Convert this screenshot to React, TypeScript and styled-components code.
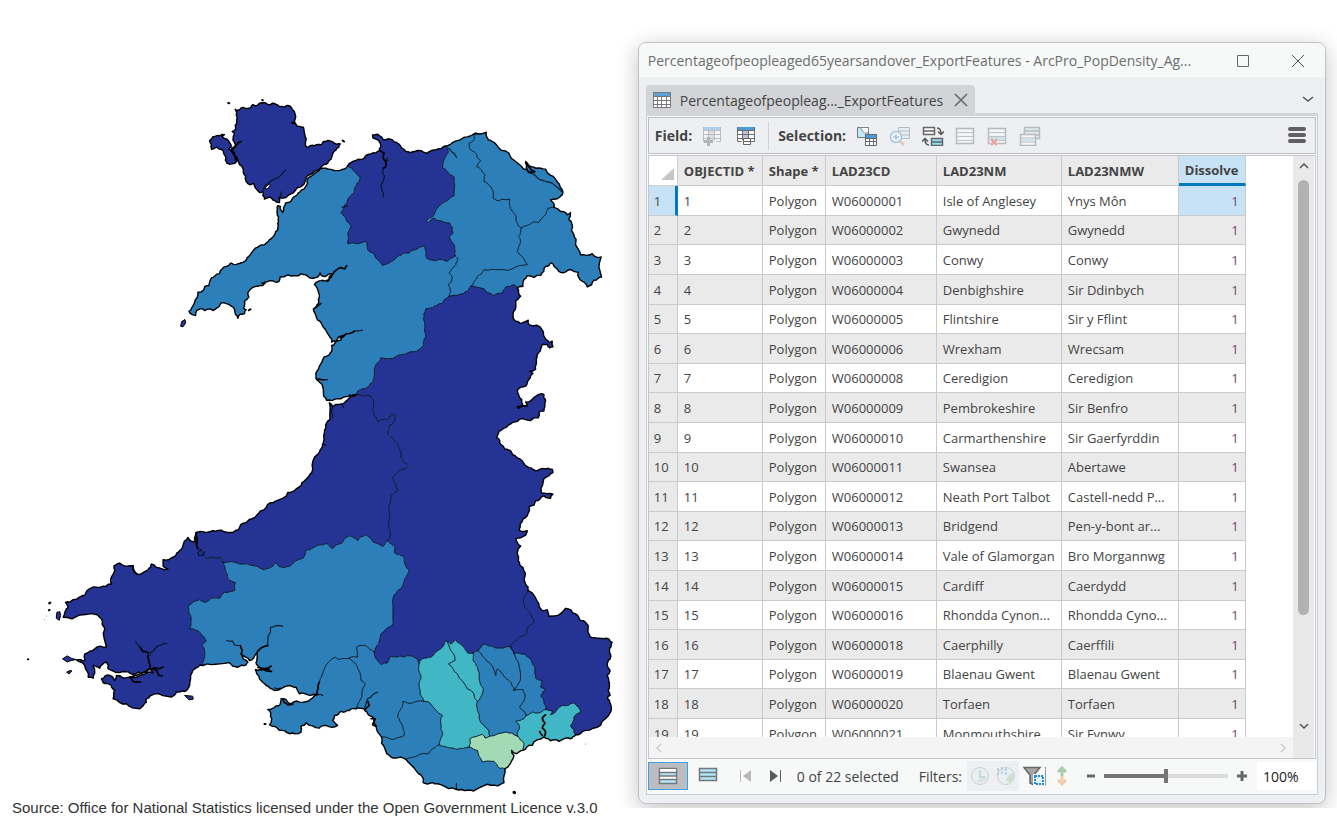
import React from 'react';
import styled, { createGlobalStyle, css } from 'styled-components';

const GlobalStyle = createGlobalStyle`
  *, *::before, *::after { box-sizing: border-box; }
  body { margin: 0; background: #fff; color: #444; font-family: "Open Sans", "Noto Sans", sans-serif; }
  button, input { font: inherit; color: inherit; }
`;

/* ------------------------------------------------------------------ map */

type Point = [number, number];

const sheets = {
  a: [540, 270],
  b: [1200, 360],
  c: [900, 960],
  d: [60, 1560],
  e: [720, 1560],
  f: [1200, 1740],
  w: [0, 0],
} as const;

const parse = (source: string): Point[] => {
  let sheet: readonly [number, number] = sheets.w;
  const out: Point[] = [];
  source.trim().split(/\s+/).forEach((token) => {
    if (token in sheets) {
      sheet = sheets[token as keyof typeof sheets];
      return;
    }
    const [x, y] = token.split(',').map(Number);
    out.push([x + sheet[0], y + sheet[1]]);
  });
  return out;
};

const noise = (x: number, y: number) => {
  const v = Math.sin(x * 12.9898 + y * 78.233) * 43758.5453;
  return (v - Math.floor(v)) * 2 - 1;
};

/* Breaks long segments up so that shores and borders look surveyed. */
const roughen = (points: Point[], amount: number): Point[] => {
  let line = points;
  for (let pass = 0; pass < 2; pass += 1) {
    const next: Point[] = [];
    line.forEach((p, i) => {
      next.push(p);
      const q = line[i + 1];
      if (!q) return;
      const dx = q[0] - p[0];
      const dy = q[1] - p[1];
      if (Math.hypot(dx, dy) < 9) return;
      const k = noise(p[0] + q[0], p[1] + q[1]) * amount;
      next.push([(p[0] + q[0]) / 2 - dy * k, (p[1] + q[1]) / 2 + dx * k]);
    });
    line = next;
  }
  return line;
};

const coast = (s: string) => roughen(parse(s), 0.17);
const border = (s: string) => roughen(parse(s), 0.13);

const coasts = {
  anglesey: coast('a 167,58 172,62 190,52 205,55 220,44 228,48 240,40 257,38 268,45 278,40 290,43 300,50 325,46 337,55 345,65 349,80 345,95 338,100 348,100 352,108 372,112 375,130 380,150 378,165 383,173 405,168 425,165 432,155 445,152 462,158 483,162 470,180 460,192 455,208 445,220 425,232 412,242 400,250 385,257 380,262 375,282 362,292 345,305 325,318 312,325 300,322 300,338 285,332 270,322 255,328 250,305 240,308 228,295 222,280 212,285 200,275 198,258 192,250 188,230 180,225 175,210 168,200 155,180 168,165 160,150 165,130 158,125 168,118 172,95 170,75 167,58'),
  holy: coast('a 90,152 100,140 120,138 135,134 128,140 150,158 155,172 147,178 158,185 166,200 172,215 158,222 142,220 138,200 132,190 128,180 110,172 96,178 95,163 90,152'),
  gwynedd: coast('a 505,228 490,238 465,242 450,238 430,235 415,245 402,254 390,262 384,270 379,290 364,303 349,318 337,330 318,340 310,368 303,350 295,348 293,370 297,395 295,420 285,435 270,450 255,465 238,470 220,485 208,500 190,518 170,525 155,520 140,530 125,540 120,552 105,560 92,572 88,588 75,592 70,603 55,608 52,625 42,645 36,655 28,665 38,675 48,678 52,662 62,657 75,663 90,658 100,663 112,655 125,640 140,642 155,650 165,660 168,675 175,686 182,674 195,672 200,660 192,655 195,635 208,622 205,610 215,597 235,590 250,588 255,578 272,573 298,576 302,562 325,556 345,558 365,552 385,560 400,566 415,562 422,550 430,560 445,556 460,552 448,572 430,572 410,578 405,585 415,600 420,620 418,640 402,658 410,680 425,700 c 77,28 90,50 97,68 110,65 118,52 135,48 125,62 108,68 104,76 97,78 97,95 75,112 60,140 50,170 62,190 72,215 82,243 105,240 130,235 155,228 165,230 172,225'),
  conwy: coast('a 505,228 530,212 555,205 575,192 600,182 605,170 600,155 582,145 580,135 595,133 608,142 612,150 640,150 655,160 668,175 b 20,95 45,95 85,100 110,90 142,78'),
  denbigh: coast('b 142,78 160,68 195,52 230,40'),
  flint: coast('b 230,40 262,37 268,60 290,72 330,100 350,125 385,150 380,125 388,135 410,145 440,148 470,178 490,210 490,225 455,240 465,262'),
  wrexham: coast('b 465,262 485,275 505,285 515,278 510,300 520,315 525,345 530,375 545,405 580,402 607,412 608,472 585,482 565,502 550,485 538,458 510,450 485,458 465,440 458,430 440,440 425,467 385,468 375,480 372,500 355,505'),
  powys: coast('b 355,505 365,530 350,545 350,565 342,590 350,605 375,608 388,602 390,615 430,632 435,650 450,668 460,665 462,682 452,685 445,675 430,675 425,690 415,705 c 712,120 710,150 692,155 702,162 690,180 680,200 655,215 668,240 672,258 655,262 658,267 685,260 680,248 700,240 720,225 735,225 740,245 735,275 720,278 718,295 670,298 640,310 620,325 600,335 593,355 605,375 635,395 640,405 670,425 690,445 715,455 735,448 760,450 762,460 735,478 730,500 728,522 762,525 755,537 735,530 710,545 705,558 690,563 685,590 672,600 660,632 685,635 680,648 650,660 665,680 655,700 658,725 672,745 675,780 f 380,15 388,35'),
  monmouth: coast('f 388,35 420,75 430,95 445,92 450,112 500,88 530,105 545,125 568,140 575,175 600,178 630,180 640,190 632,215 634,240 626,262 634,275 625,290 632,320 634,350 626,356 635,375 635,400 605,440 560,455 530,468'),
  newport: coast('f 372,515 400,500 435,475 455,486 480,488 515,480 530,468'),
  cardiff: coast('f 318,570 330,560 345,530 338,515 352,525 372,515'),
  vale: coast('f 20,542 50,575 72,612 100,612 130,620 170,632 205,635 240,628 275,620 315,612 318,570'),
  bridgend: coast('e 427,655 437,690 455,715 485,715 500,722'),
  neath: coast('e 350,570 375,572 390,590 405,600 410,620 427,655'),
  swansea: coast('e 230,528 215,540 180,550 150,555 135,540 125,540 120,560 85,572 97,600 90,618 120,635 150,645 185,640 185,622 200,612 240,628 260,620 295,620 280,605 285,590 305,578 330,575 350,570'),
  carmarthen: coast('d 550,440 600,435 655,445 680,438 685,430 665,405 690,425 712,402 e 52,420 54,440 68,450 48,452 60,480 80,500 105,515 150,500 170,505 180,525 205,528 230,528'),
  pembroke: coast('d 530,40 530,70 505,55 495,65 480,95 465,112 430,122 430,140 445,150 410,145 395,135 385,152 350,165 340,140 300,132 283,140 280,165 275,195 240,205 205,212 195,228 160,242 137,250 145,265 130,295 180,288 245,300 255,330 260,385 225,390 195,405 195,425 170,423 195,440 205,475 220,478 225,460 220,440 240,448 262,430 265,450 310,458 340,467 370,462 390,450 400,462 365,468 330,475 290,470 285,485 270,470 245,480 250,492 275,500 285,515 280,540 320,555 360,570 380,550 380,540 405,525 455,535 470,520 495,518 510,500 518,460 530,446 550,440'),
  ceredigion: coast('d 530,40 570,38 605,33 640,40 665,15 w 750,1560 770,1550 800,1525 830,1505 865,1480 900,1463 c 20,480 40,450 55,405 70,380 75,340 82,310 92,300 90,250 100,262 120,255 140,245 155,230 172,225'),
};

const borders = {
  gwyPow: border('c 172,225 175,215 190,208 205,203 222,185 225,155 230,135 245,115 262,118 280,117 295,108 b 12,705 25,700 60,690 72,680 75,660 80,650 78,620 72,600 80,568 105,560 130,552 150,530'),
  gwyCon: border('a 505,228 525,245 543,262 540,275 528,290 525,310 505,330 497,345 485,368 495,380 502,395 515,408 505,432 505,462 530,462 560,455 565,480 585,492 600,515 610,528 630,520 655,500 b 15,400 30,400 50,390 78,380 82,415 100,422 125,420 145,425 168,408'),
  gwyDen: border('b 168,408 175,415 170,435 150,460 160,475 148,495 155,515 150,530'),
  denCon: border('b 168,408 168,395 165,375 150,352 162,340 152,310 130,305 105,295 88,310 82,302 103,288 110,270 130,250 165,228 165,172 145,155 130,145 135,118 148,95 142,78'),
  denFli: border('b 230,40 225,60 210,70 215,90 228,98 245,122 232,140 258,165 255,185 280,210 282,235 300,242 332,238 340,275 352,292 358,318 368,325'),
  fliWre: border('b 368,325 400,308 420,308 440,285 447,265 465,262'),
  wrePow: border('b 355,505 345,495 320,502 310,520 285,528 265,520 255,508 230,502 215,500'),
  denWre: border('b 368,325 358,350 365,365 355,395 385,435 350,442 300,450 255,450 235,470 215,500'),
  denPow: border('b 215,500 205,515 180,525 150,530'),
  powMon: border('f 388,35 375,55 378,85 395,105 405,130 385,150 378,170 350,185 335,203'),
  powBla: border('f 335,203 290,207 250,195 237,215'),
  powCae: border('f 237,215 222,222'),
  powMer: border('f 222,222 205,222 195,205 175,190 170,183 155,195 145,188'),
  powRho: border('f 145,188 138,187 130,205 100,232 75,238 60,253'),
  powNea: border('f 60,253 55,240 25,230 0,232 e 450,415 445,432 425,437 405,400'),
  powCar: border('e 405,400 425,345 462,315 460,245 475,215 497,180 510,152 495,125 495,115 465,100 468,85 445,65'),
  cerPow: border('c 172,225 212,228 222,240 222,280 235,308 265,300 285,285 288,295 280,315 270,318 265,345 295,375 305,415 328,440 300,455 278,475 290,500 297,515 275,530 270,600 272,655 265,665'),
  cerCar: border('e 445,65 430,82 380,47 355,65 330,50 280,88 262,73 215,90 200,92 190,118 150,142 118,142 108,130 100,142 75,152 45,140 0,135 d 645,130 610,130'),
  cerPem: border('d 610,130 603,115 575,115 560,118 545,92 535,90 532,70 530,40'),
  pemCar: border('d 550,440 555,415 548,380 560,365 545,345 510,330 515,300 505,260 540,242 560,250 575,238 600,238 615,220 645,215 648,190 625,178 618,155 610,130'),
  carSwa: border('e 230,528 240,490 255,450 288,415 300,422 330,418'),
  carNea: border('e 330,418 355,415 352,385 380,380 405,400'),
  swaNea: border('e 330,418 352,440 365,485 378,495 350,570'),
  neaBri: border('e 427,655 465,662 495,650 490,620 475,595 485,570 490,548 f 40,372 75,368'),
  neaRho: border('f 60,253 65,290 60,325 75,368'),
  rhoBri: border('f 75,368 92,372 130,410 125,450 130,470 120,498'),
  briVal: border('f 120,498 105,508 88,525 60,528 20,542'),
  valRho: border('f 120,498 155,508 175,512 210,505'),
  valCdf: border('f 210,505 235,515 250,550 285,548 300,568 318,570'),
  cdfRho: border('f 210,505 212,480 250,467 258,478 272,472'),
  cdfCae: border('f 272,472 320,460 355,472'),
  cdfNew: border('f 355,472 375,495 372,515'),
  rhoMer: border('f 145,188 155,215 168,245 148,255 175,285 205,330 235,368'),
  merCae: border('f 222,222 222,245 235,265 240,300 253,330 240,365 235,368'),
  rhoCae: border('f 235,368 235,395 255,440 270,455 272,472'),
  caeBla: border('f 237,215 262,245 290,290 295,270 330,305 345,335'),
  blaTor: border('f 335,203 345,225 358,250 355,320 345,335'),
  caeTor: border('f 345,335 372,332 378,355 362,385 382,410'),
  caeNew: border('f 382,410 375,420 350,428 362,445 355,472'),
  torNew: border('f 382,410 400,400 420,402 440,392'),
  torMon: border('f 335,203 345,225 375,225 395,240 408,265 410,298 430,305 425,325 440,330 425,350 435,370 440,392'),
  newMon: border('f 440,392 460,395 455,408 490,380 525,372 545,402 525,415 515,440 530,468'),
};

const navy = '#253494';
const blue = '#2c7fb8';
const teal = '#41b6c4';
const mint = '#a1dab4';

/* Chains arcs into one ring, turning an arc round when its far end is the nearer one. */
const ring = (...arcs: Point[][]): Point[] => {
  const gap = (p: Point, q: Point) => Math.hypot(p[0] - q[0], p[1] - q[1]);
  let line = [...arcs[0]];
  if (arcs.length > 1) {
    const next = arcs[1];
    const head = Math.min(gap(line[0], next[0]), gap(line[0], next[next.length - 1]));
    const end = line[line.length - 1];
    const tail = Math.min(gap(end, next[0]), gap(end, next[next.length - 1]));
    if (head < tail) line.reverse();
  }
  arcs.slice(1).forEach((arc) => {
    const end = line[line.length - 1];
    const forward = gap(end, arc[0]) <= gap(end, arc[arc.length - 1]);
    line = line.concat(forward ? arc : [...arc].reverse());
  });
  return line;
};

const C = coasts;
const B = borders;

const regions: { name: string; fill: string; shape: Point[] }[] = [
  { name: 'Isle of Anglesey', fill: navy, shape: C.anglesey },
  { name: 'Holy Island', fill: navy, shape: C.holy },
  { name: 'Gwynedd', fill: blue, shape: ring(C.gwynedd, B.gwyPow, B.gwyDen, B.gwyCon) },
  { name: 'Conwy', fill: navy, shape: ring(C.conwy, B.denCon, B.gwyCon) },
  { name: 'Denbighshire', fill: blue, shape: ring(C.denbigh, B.denFli, B.denWre, B.denPow, B.gwyDen, B.denCon) },
  { name: 'Flintshire', fill: blue, shape: ring(C.flint, B.fliWre, B.denFli) },
  { name: 'Wrexham', fill: blue, shape: ring(C.wrexham, B.wrePow, B.denWre, B.fliWre) },
  { name: 'Powys', fill: navy, shape: ring(C.powys, B.powMon, B.powBla, B.powCae, B.powMer, B.powRho, B.powNea, B.powCar, B.cerPow, B.gwyPow, B.denPow, B.wrePow) },
  { name: 'Ceredigion', fill: navy, shape: ring(C.ceredigion, B.cerPow, B.cerCar, B.cerPem) },
  { name: 'Pembrokeshire', fill: navy, shape: ring(C.pembroke, B.pemCar, B.cerPem) },
  { name: 'Carmarthenshire', fill: blue, shape: ring(C.carmarthen, B.carSwa, B.carNea, B.powCar, B.cerCar, B.pemCar) },
  { name: 'Swansea', fill: blue, shape: ring(C.swansea, B.swaNea, B.carSwa) },
  { name: 'Neath Port Talbot', fill: blue, shape: ring(C.neath, B.neaBri, B.neaRho, B.powNea, B.carNea, B.swaNea) },
  { name: 'Bridgend', fill: blue, shape: ring(C.bridgend, B.briVal, B.rhoBri, B.neaBri) },
  { name: 'Vale of Glamorgan', fill: blue, shape: ring(C.vale, B.valCdf, B.valRho, B.briVal) },
  { name: 'Cardiff', fill: mint, shape: ring(C.cardiff, B.cdfNew, B.cdfCae, B.cdfRho, B.valCdf) },
  { name: 'Rhondda Cynon Taf', fill: teal, shape: ring(B.powRho, B.neaRho, B.rhoBri, B.valRho, B.cdfRho, B.rhoCae, B.rhoMer) },
  { name: 'Merthyr Tydfil', fill: teal, shape: ring(B.powMer, B.rhoMer, B.merCae) },
  { name: 'Caerphilly', fill: blue, shape: ring(B.powCae, B.merCae, B.rhoCae, B.cdfCae, B.caeNew, B.caeTor, B.caeBla) },
  { name: 'Blaenau Gwent', fill: blue, shape: ring(B.powBla, B.caeBla, B.blaTor) },
  { name: 'Torfaen', fill: blue, shape: ring(B.torMon, B.torNew, B.caeTor, B.blaTor) },
  { name: 'Newport', fill: teal, shape: ring(C.newport, B.newMon, B.torNew, B.caeNew, B.cdfNew) },
  { name: 'Monmouthshire', fill: navy, shape: ring(C.monmouth, B.newMon, B.torMon, B.powMon) },
];

const rivers = [
  'a 318,240 305,255 295,265 275,273 262,283 252,300',
  'a 300,338 303,322 306,306',
  'a 612,235 615,265 605,285 608,302 612,322',
  'a 488,352 505,348',
  'c 165,35 190,32',
  'c 50,177 65,180 85,181',
  'c 100,262 100,296',
  'c 125,252 133,265',
  'c 68,375 80,378',
  'b 148,85 165,100 172,112',
  'b 385,155 395,160 420,178 488,215',
  'd 362,385 348,368',
  'd 388,405 410,385 425,378 442,374',
  'd 662,380 645,378 638,366 622,365',
  'd 545,92 535,100 538,110 548,108 555,98',
  'e 85,380 90,345 93,325 110,320 130,322',
  'e 105,507 125,508',
  'e 230,528 250,530',
  'e 378,572 385,540 415,520',
  'f 172,615 172,632',
].map(border);

const estuaries = [
  'a 603,182 615,190 612,205 620,215 618,232 612,235',
  'a 155,180 160,190 168,200 175,212',
  'a 158,178 170,165 185,155',
  'a 338,97 346,98',
  'a 248,580 256,582',
  'a 408,655 424,642',
  'a 445,575 450,562 462,552 470,542 485,534 497,537 502,528',
  'c 122,55 135,47 150,42 165,35',
  'c 58,179 74,181',
  'c 150,228 160,228 170,226',
  'b 380,128 388,140 396,150 408,156 390,158 385,150',
  'd 388,405 380,398 370,398 362,385',
  'd 388,405 387,430 393,450 412,448 430,445',
  'd 393,450 412,455 418,470 428,470',
  'd 330,475 340,488 362,490',
  'd 330,475 345,470 365,464 380,460 393,450',
  'd 665,405 668,395 662,380',
  'd 340,140 345,160 352,166',
  'd 530,40 530,75 536,90',
  'e 52,402 62,390 85,380',
  'e 55,446 75,450 95,442',
  'e 60,452 80,456 96,458',
  'e 66,450 90,452',
  'e 233,527 236,508 240,490',
  'e 130,540 135,552 145,558 160,556',
  'e 378,572 390,560 386,548',
  'e 395,600 408,600 400,618 410,622',
  'f 435,475 440,460 430,448 438,432 430,418 440,408',
  'f 422,458 430,470',
].map(border);

const toPath = (points: Point[], closed = false) =>
  `M${points.map(([x, y]) => `${x.toFixed(1)} ${y.toFixed(1)}`).join('L')}${closed ? 'Z' : ''}`;

const WalesMap = () => (
  <MapSvg viewBox="0 270 1872 2130" role="img" aria-label="Map of Welsh local authorities">
    {regions.map((r) => (
      <path key={r.name} d={toPath(r.shape, true)} fill={r.fill} />
    ))}
    <g fill="none" stroke="#04121f" strokeLinejoin="round" strokeLinecap="round">
      {Object.entries(borders).map(([key, line]) => (
        <path key={key} d={toPath(line)} strokeWidth="2.8" />
      ))}
      {rivers.map((line, i) => (
        <path key={i} d={toPath(line)} strokeWidth="3.2" />
      ))}
      {estuaries.map((line, i) => (
        <path key={i} d={toPath(line)} strokeWidth="5" stroke="#000" />
      ))}
      {Object.entries(coasts).map(([key, line]) => (
        <path key={key} d={toPath(line)} strokeWidth="4.2" stroke="#000" />
      ))}
    </g>
    <g stroke="#000" strokeWidth="3" strokeLinejoin="round">
      <path d="M798 562l12 -10 2 4 -6 10 -8 2z" fill="#fff" />
      <path d="M1161 476l4 -1 1 7 -4 1z" fill="#fff" />
      <path d="M446 1963l4 -2 1 8 -4 1z" fill="#fff" />
      <path d="M546 966l10 -6 2 10 -8 12 -7 -2z" fill={navy} />
      <path d="M1030 422l4 3M748 932l5 -3M686 309l3 1M788 300l2 1" strokeWidth="6" strokeLinecap="round" />
      <path d="M171 1840l9 -2 2 12 -4 14 -9 -6z" fill={navy} />
      <path d="M188 1980l14 -9 14 8 14 3 -16 3 -12 4z" fill={navy} />
      <path d="M200 2020l10 -5 6 1 -8 9z" fill={navy} />
      <path d="M555 2090l24 2 2 9 -13 2z" fill={navy} />
      <path d="M148 1813l3 -2M147 1834l2 -1M84 1981l1 0M795 2176l3 0" strokeWidth="6" strokeLinecap="round" />
      <path d="M1545 2381l2 1" strokeWidth="9" strokeLinecap="round" />
      <path d="M1760 2236l1 0M132 1862l1 0M140 1851l1 0" strokeWidth="4" />
    </g>
  </MapSvg>
);

/* --------------------------------------------------------------- layout */

const Page = styled.main`
  display: grid;
  grid-template-columns: 624fr 713fr;
  align-items: start;
`;

const Figure = styled.figure`
  margin: 0;
  padding-top: 90px;
`;

const MapSvg = styled.svg`
  display: block;
  width: 100%;
  height: auto;
`;

const Caption = styled.figcaption`
  padding-left: 12px;
  font: 15px/18px "Liberation Sans", Arial, sans-serif;
  color: #333;
  white-space: nowrap;
`;

const Stage = styled.section`
  padding: 42px 11px 4px 15px;
  clip-path: inset(0 0 0 -30px);
`;

const Window = styled.section`
  display: flex;
  flex-direction: column;
  border: 1px solid #bfc1c4;
  border-radius: 8px;
  background: #eeeff2;
  box-shadow: 0 5px 22px rgba(0, 0, 0, 0.24);
  overflow: hidden;
`;

const TitleBar = styled.header`
  display: flex;
  align-items: center;
  height: 34px;
  padding: 1px 17px 0 9px;
  background: #f6f9f8;
`;

const Title = styled.h1`
  flex: 1;
  min-width: 0;
  margin: 0;
  font-size: 14px;
  line-height: 20px;
  font-weight: 400;
  color: #6d6d6d;
  white-space: nowrap;
`;

const PlainButton = styled.button<{ $w?: number; $faded?: boolean }>`
  display: flex;
  align-items: center;
  justify-content: center;
  flex: none;
  width: ${(p) => p.$w ?? 20}px;
  height: 20px;
  padding: 0;
  border: 0;
  background: none;
  opacity: ${(p) => (p.$faded ? 0.38 : 1)};
`;

const WindowButtons = styled.div`
  display: flex;
  gap: 35px;
`;

const Body = styled.div`
  padding: 8px 7px;
`;

const TabStrip = styled.div`
  display: flex;
  align-items: center;
  justify-content: space-between;
  border-bottom: 3px solid #d3d4d8;
`;

const Tab = styled.div`
  display: flex;
  align-items: center;
  gap: 8px;
  height: 28px;
  padding: 2px 4px 0 6px;
  border-radius: 4px 4px 0 0;
  background: #d3d4d8;
  font-size: 14px;
  white-space: nowrap;
`;

const Dock = styled.div`
  padding: 1px;
  border: 1px solid #c9ccd1;
  border-top: 0;
  background: #f7f9f9;
`;

const Toolbar = styled.div`
  display: flex;
  align-items: center;
  height: 37px;
  padding: 0 8px 0 6px;
  border: 1px solid #bcbfc4;
  background: #eeeff2;
`;

const ToolLabel = styled.span`
  font-size: 14px;
  font-weight: 700;
  color: #444;
`;

const ToolGroup = styled.div<{ $gap: number; $start: number }>`
  display: flex;
  gap: ${(p) => p.$gap}px;
  margin-left: ${(p) => p.$start}px;
`;

const Divider = styled.span`
  flex: none;
  width: 1px;
  height: 28px;
  margin: 0 9px 0 12px;
  background: #cfd1d5;
`;

const FilterDivider = styled.span`
  width: 1px;
  height: 19px;
  background: #999;
`;

const MenuButton = styled(PlainButton)`
  margin-left: auto;
`;

const Grid = styled.div`
  display: flex;
  margin-top: 1px;
  border: 1px solid #c4c6ca;
  background: #fff;
`;

const GridMain = styled.div`
  flex: 1;
  min-width: 0;
`;

const TableView = styled.div`
  height: 581px;
  overflow: hidden;
`;

const Table = styled.table`
  width: 597px;
  table-layout: fixed;
  border-collapse: separate;
  border-spacing: 0;
  font-size: 13px;
  line-height: 20px;
`;

const cell = css`
  padding: 0 0 0 6px;
  border-right: 1px solid #cacaca;
  border-bottom: 1px solid #cacaca;
  text-align: left;
  white-space: nowrap;
`;

const HeadCell = styled.th<{ $active?: boolean }>`
  ${cell}
  height: 30px;
  font-weight: 700;
  color: #444;
  background: ${(p) => (p.$active ? '#c8e2f5' : '#eaeaea')};
  ${(p) => p.$active && css`
    border-bottom: 3px solid #0079c1;
  `}
`;

const CornerCell = styled.td`
  padding: 8px 3px 0 12px;
  border-right: 1px solid #cfcfcf;
  border-bottom: 1px solid #cfcfcf;
  background: #fff;
`;

const RowNumber = styled.th<{ $current?: boolean }>`
  ${cell}
  padding-left: 5px;
  font-weight: 400;
  background: ${(p) => (p.$current ? '#c8e2f5' : '#eaeaea')};
  ${(p) => p.$current && css`
    border-right: 3px solid #0079c1;
  `}
`;

const Cell = styled.td<{ $number?: boolean; $current?: boolean }>`
  ${cell}
  ${(p) => p.$number && css`
    padding: 0 6px 0 0;
    text-align: right;
    color: #6a4a6c;
  `}
  ${(p) => p.$current && css`
    background: #c8e2f5;
  `}
`;

const Row = styled.tr`
  height: 30px;
  &:nth-child(5n + 2), &:nth-child(5n) { height: 29px; }
  &:nth-child(even) { background: #eaeaea; }
`;

const HScroll = styled.div`
  display: flex;
  align-items: center;
  justify-content: space-between;
  height: 21px;
  padding: 0 5px;
  background: #f4f4f4;
`;

const VScroll = styled.div`
  display: flex;
  flex-direction: column;
  align-items: center;
  width: 21px;
  padding-bottom: 22px;
  background: #e9e9e9;
`;

const Track = styled.div`
  flex: 1;
  padding-top: 4px;
`;

const Thumb = styled.div`
  width: 11px;
  height: 435px;
  border-radius: 6px;
  background: #b2b2b2;
`;

const ScrollEdge = styled.div`
  width: 1px;
  background: #fff;
`;

const Footer = styled.footer`
  display: flex;
  align-items: center;
  height: 34px;
  background: #f6f9f8;
  font-size: 14px;
  white-space: nowrap;
`;

const ViewButton = styled(PlainButton)<{ $pressed?: boolean }>`
  width: 40px;
  height: 28px;
  ${(p) => p.$pressed && css`
    border: 1px solid #35a3ea;
    background: #bcbdc3;
  `}
`;

const StepButtons = styled.div`
  display: flex;
  gap: 9px;
  margin: 0 12px 0 8px;
`;

const Status = styled.span`
  width: 122px;
`;

const FilterBox = styled.div`
  display: flex;
  align-items: center;
  gap: 6px;
  height: 30px;
  margin-left: 5px;
  padding: 0 3px;
  background: #eeeff2;
`;

const Zoom = styled.div`
  display: flex;
  align-items: center;
  gap: 8px;
  margin-left: 9px;
`;

const Slider = styled.input`
  appearance: none;
  width: 124px;
  height: 14px;
  margin: 0;
  background: linear-gradient(to right, #757575 50%, #dcdcdc 50%) center / 100% 4px no-repeat;
  &::-webkit-slider-thumb {
    appearance: none;
    width: 4px;
    height: 14px;
    background: #757575;
  }
`;

const ZoomInput = styled.input`
  flex: 1;
  min-width: 0;
  width: 59px;
  height: 28px;
  margin-left: 9px;
  padding: 0 6px;
  border: 0;
  background: #fff;
  color: #222;
  font-size: 14px;
`;

const Filters = styled.div`
  display: flex;
  align-items: center;
  margin-left: 4px;
`;

/* ---------------------------------------------------------------- icons */

const Icon = ({ w = 20, h = 20, children }: { w?: number; h?: number; children: React.ReactNode }) => (
  <svg width={w} height={h} viewBox={`0 0 ${w} ${h}`} fill="none" aria-hidden="true">
    {children}
  </svg>
);

const TableIcon = () => (
  <Icon>
    <path d="M1 2h18v16H1z" fill="#fff" />
    <path d="M1 2h18v4H1z" fill="#5ba4d9" />
    <path d="M1.500 2.500h17v15h-17zM1 6.500h18M1 10.500h18M1 14.500h18M5.500 6v12M9.500 6v12M14.500 6v12" stroke="#777" />
  </Icon>
);

const FieldIcon = ({ sign }: { sign: 'plus' | 'minus' }) => (
  <Icon>
    <path d="M1 1h18v14H1z" fill="#fff" />
    <path d="M7 5h5v10H7z" fill="#c5bddd" />
    <path d="M1 1h18v4H1z" fill="#4b9cd8" />
    <path d="M1.500 1v14.500h4M18.500 1v14.500h-4M1 4.500h18M1 8.500h18M1 12.500h18M6.500 5v9M12.500 5v9" stroke="#6b6b6b" />
    {sign === 'plus' ? (
      <path d="M2 15.500h9M6.500 11v9" stroke="#555" strokeWidth="3" />
    ) : (
      <path d="M7.500 12.500h7v6h-7zM8 15.500h6" stroke="#666" fill="#fff" />
    )}
  </Icon>
);

const SelectByIcon = () => (
  <Icon w={22}>
    <path d="M1.500 1.500h11v10h-11z" fill="#bfe9fa" stroke="#777" />
    <path d="M4 1.500h8.500V6L9 7.500 7 5.500z" fill="#fff" stroke="#888" />
    <path d="M9 8h12v12H9z" fill="#fff" />
    <path d="M9 8h12v4H9z" fill="#4b9cd8" />
    <path d="M9.500 8.500h11v11h-11zM9 12.500h12M9 15.500h12M13.500 12v8M17.500 12v8" stroke="#666" />
  </Icon>
);

const ZoomSelectedIcon = () => (
  <Icon w={22}>
    <path d="M9.500 1.500h11v11h-11zM9 5h12M9 9h12" stroke="#666" fill="#d8eef8" />
    <circle cx="7" cy="11" r="5.500" fill="#fff" stroke="#2f87c8" strokeWidth="1.500" />
    <path d="M4 11h6M7 8v6" stroke="#2f87c8" strokeWidth="1.500" />
    <path d="M11 15l4 4" stroke="#d98340" strokeWidth="2.500" />
  </Icon>
);

const SwitchIcon = () => (
  <Icon w={22}>
    <path d="M1 1h12v8H1z" fill="#fff" />
    <path d="M9 12h12v8H9z" fill="#8fdcf2" />
    <path d="M1.500 1.500h11v7h-11zM1 5h12M9.500 12.500h11v7h-11zM9 16h12" stroke="#666" strokeWidth="1.500" />
    <path d="M15 2c3 0 4 2 4 6M16 5.500l3 3 3-3M7 19c-3 0-4-2-4-6M0 15.500l3-3 3 3" stroke="#555" strokeWidth="1.500" />
  </Icon>
);

const RowsIcon = ({ mode = 'plain' }: { mode?: 'plain' | 'clear' }) => (
  <Icon>
    <path d="M1.500 2.500h17v15h-17z" fill="#fff" stroke="#666" strokeWidth="1.500" />
    {mode === 'clear' && <path d="M2 11h16v3H2z" fill="#8fd3ee" />}
    <path d="M1 6.500h18M1 10.500h18M1 14.500h18" stroke="#777" />
    {mode === 'clear' && (
      <>
        <path d="M3 13h8v7H3z" fill="#eeeff2" />
        <path d="M4 13l6 6M10 13l-6 6" stroke="#d3371c" strokeWidth="2.500" />
      </>
    )}
  </Icon>
);

const CopyRowsIcon = () => (
  <Icon w={22}>
    <path d="M5.500 1.500h15v11h-15zM5 5h16M5 9h16" fill="#bfe4f3" stroke="#666" strokeWidth="1.500" />
    <path d="M1.500 8.500h15v11h-15z" fill="#fff" stroke="#666" strokeWidth="1.500" />
    <path d="M1 12h16M1 16h16" stroke="#666" />
    <path d="M2 14h14" stroke="#9bd9f0" strokeWidth="2" />
  </Icon>
);

const Chevron = ({ d, color = '#555', size = 12 }: { d: string; color?: string; size?: number }) => (
  <Icon w={size} h={size}>
    <path d={d} stroke={color} strokeWidth="1.500" />
  </Icon>
);

const ViewIcon = ({ selected }: { selected?: boolean }) => (
  <Icon h={18}>
    <path d={selected ? 'M1.500 1.500h17v12h-17z' : 'M1.500 1.500h17v15h-17z'} fill="#aee6fa" stroke="#777" strokeWidth="1.500" />
    {selected ? (
      <path d="M1 5.500h18M1 9.500h18" stroke="#777" strokeWidth="1.500" />
    ) : (
      <>
        <path d="M2 2h16v3H2zM2 9h16v3H2z" fill="#fff" />
        <path d="M1 5.500h18M1 9h18M1 12.500h18" stroke="#777" strokeWidth="1.500" />
      </>
    )}
  </Icon>
);

const StepIcon = ({ back }: { back?: boolean }) => (
  <Icon w={12} h={12}>
    {back ? (
      <path d="M0 0h1v12H0zM11 0v12L3 6z" fill="#b8b8b8" />
    ) : (
      <path d="M1 0v12l8-6zM11 0h1v12h-1z" fill="#5a5a5a" />
    )}
  </Icon>
);

const ClockIcon = ({ ticks }: { ticks?: boolean }) => (
  <Icon>
    <circle cx="10" cy="10" r="8.500" fill="#e4f0f5" stroke="#999" />
    {ticks ? (
      <>
        <path d="M12 10l5-4 1 5-4 6-4-3z" fill="#9cc59d" />
        <path d="M2 2v8M6 1v8M10 2v8" stroke="#3f8fcb" strokeWidth="1.500" strokeDasharray="3 1" />
      </>
    ) : (
      <>
        <path d="M10 10h7a7 7 0 0 1-10 6z" fill="#b9d8bd" />
        <path d="M10 4v7h5" stroke="#78a898" strokeWidth="1.500" />
      </>
    )}
  </Icon>
);

const FunnelIcon = () => (
  <Icon w={22}>
    <path d="M1 1.500h16L11 9v10l-4-2V9z" fill="#a6a6a6" stroke="#666" strokeWidth="1.500" />
    <path d="M10 8h12v12H10z" fill="#f6f9f8" />
    <path d="M12 10h8v8h-8z" fill="#e3f1fb" stroke="#1f8ad6" strokeWidth="2" strokeDasharray="2 1" />
  </Icon>
);

const ExtentIcon = () => (
  <Icon w={12}>
    <path d="M6 2v8M2 6l4-4 4 4" stroke="#a9cdae" strokeWidth="3" />
    <path d="M6 10v8M2 14l4 4 4-4" stroke="#f2cdaa" strokeWidth="3" />
  </Icon>
);

/* ----------------------------------------------------------------- data */

const columns = [
  { label: 'OBJECTID *', width: 85 },
  { label: 'Shape *', width: 63 },
  { label: 'LAD23CD', width: 111 },
  { label: 'LAD23NM', width: 125 },
  { label: 'LAD23NMW', width: 117 },
  { label: 'Dissolve', width: 67 },
];

const rows: [string, string, string][] = [
  ['W06000001', 'Isle of Anglesey', 'Ynys Môn'],
  ['W06000002', 'Gwynedd', 'Gwynedd'],
  ['W06000003', 'Conwy', 'Conwy'],
  ['W06000004', 'Denbighshire', 'Sir Ddinbych'],
  ['W06000005', 'Flintshire', 'Sir y Fflint'],
  ['W06000006', 'Wrexham', 'Wrecsam'],
  ['W06000008', 'Ceredigion', 'Ceredigion'],
  ['W06000009', 'Pembrokeshire', 'Sir Benfro'],
  ['W06000010', 'Carmarthenshire', 'Sir Gaerfyrddin'],
  ['W06000011', 'Swansea', 'Abertawe'],
  ['W06000012', 'Neath Port Talbot', 'Castell-nedd P...'],
  ['W06000013', 'Bridgend', 'Pen-y-bont ar...'],
  ['W06000014', 'Vale of Glamorgan', 'Bro Morgannwg'],
  ['W06000015', 'Cardiff', 'Caerdydd'],
  ['W06000016', 'Rhondda Cynon...', 'Rhondda Cyno...'],
  ['W06000018', 'Caerphilly', 'Caerffili'],
  ['W06000019', 'Blaenau Gwent', 'Blaenau Gwent'],
  ['W06000020', 'Torfaen', 'Torfaen'],
  ['W06000021', 'Monmouthshire', 'Sir Fynwy'],
];

const AttributeTable = () => (
  <Table>
    <colgroup>
      <col style={{ width: 29 }} />
      {columns.map((c) => (
        <col key={c.label} style={{ width: c.width }} />
      ))}
    </colgroup>
    <thead>
      <tr>
        <CornerCell>
          <Icon w={13} h={12}>
            <path d="M13 0v12H0z" fill="#c6c6c6" />
          </Icon>
        </CornerCell>
        {columns.map((c) => (
          <HeadCell key={c.label} scope="col" $active={c.label === 'Dissolve'}>{c.label}</HeadCell>
        ))}
      </tr>
    </thead>
    <tbody>
      {rows.map(([code, name, welsh], i) => (
        <Row key={code}>
          <RowNumber scope="row" $current={i === 0}>{i + 1}</RowNumber>
          <Cell>{i + 1}</Cell>
          <Cell>Polygon</Cell>
          <Cell>{code}</Cell>
          <Cell>{name}</Cell>
          <Cell>{welsh}</Cell>
          <Cell $number $current={i === 0}>1</Cell>
        </Row>
      ))}
    </tbody>
  </Table>
);

export default function App() {
  return (
    <>
      <GlobalStyle />
      <Page>
        <Figure>
          <WalesMap />
          <Caption>Source: Office for National Statistics licensed under the Open Government Licence v.3.0</Caption>
        </Figure>
        <Stage>
          <Window>
            <TitleBar>
              <Title>Percentageofpeopleaged65yearsandover_ExportFeatures - ArcPro_PopDensity_Ag...</Title>
              <WindowButtons>
                <PlainButton aria-label="Maximise">
                  <Icon w={14} h={14}><path d="M1.500 1.500h11v11h-11z" stroke="#666" /></Icon>
                </PlainButton>
                <PlainButton aria-label="Close window">
                  <Icon w={14} h={14}><path d="M1 1l12 12M13 1L1 13" stroke="#555" /></Icon>
                </PlainButton>
              </WindowButtons>
            </TitleBar>
            <Body>
              <TabStrip>
                <Tab>
                  <TableIcon />
                  <span>Percentageofpeopleag..._ExportFeatures</span>
                  <PlainButton aria-label="Close tab">
                    <Icon w={14} h={14}><path d="M1 1l12 12M13 1L1 13" stroke="#666" strokeWidth="1.500" /></Icon>
                  </PlainButton>
                </Tab>
                <PlainButton aria-label="More tabs"><Chevron d="M1 4l5 4 5-4" /></PlainButton>
              </TabStrip>
              <Dock>
                <Toolbar>
                  <ToolLabel>Field:</ToolLabel>
                  <ToolGroup $gap={14} $start={10}>
                    <PlainButton aria-label="Add field" disabled $faded><FieldIcon sign="plus" /></PlainButton>
                    <PlainButton aria-label="Calculate field"><FieldIcon sign="minus" /></PlainButton>
                  </ToolGroup>
                  <Divider />
                  <ToolLabel>Selection:</ToolLabel>
                  <ToolGroup $gap={11} $start={10}>
                    <PlainButton $w={22} aria-label="Select by attributes"><SelectByIcon /></PlainButton>
                    <PlainButton $w={22} aria-label="Zoom to selection" disabled $faded><ZoomSelectedIcon /></PlainButton>
                    <PlainButton $w={22} aria-label="Switch selection"><SwitchIcon /></PlainButton>
                    <PlainButton aria-label="Clear selection" disabled $faded><RowsIcon /></PlainButton>
                    <PlainButton $w={22} aria-label="Delete selection" disabled $faded><RowsIcon mode="clear" /></PlainButton>
                    <PlainButton $w={22} aria-label="Copy rows" disabled $faded><CopyRowsIcon /></PlainButton>
                  </ToolGroup>
                  <MenuButton aria-label="Menu">
                    <Icon><path d="M3 3h14M3 9h14M3 15h14" stroke="#606060" strokeWidth="4" strokeLinecap="round" /></Icon>
                  </MenuButton>
                </Toolbar>
                <Grid>
                  <GridMain>
                    <TableView><AttributeTable /></TableView>
                    <HScroll>
                      <Chevron d="M7 2L3 6l4 4" color="#ccc" />
                      <Chevron d="M5 2l4 4-4 4" color="#ccc" />
                    </HScroll>
                  </GridMain>
                  <VScroll>
                    <PlainButton aria-label="Scroll up"><Chevron d="M2 8l4-4 4 4" /></PlainButton>
                    <Track><Thumb /></Track>
                    <PlainButton aria-label="Scroll down"><Chevron d="M2 4l4 4 4-4" /></PlainButton>
                  </VScroll>
                  <ScrollEdge />
                </Grid>
                <Footer>
                  <ViewButton $pressed aria-label="Show all records"><ViewIcon /></ViewButton>
                  <ViewButton aria-label="Show selected records"><ViewIcon selected /></ViewButton>
                  <StepButtons>
                    <PlainButton aria-label="First record" disabled><StepIcon back /></PlainButton>
                    <PlainButton aria-label="Last record"><StepIcon /></PlainButton>
                  </StepButtons>
                  <Status>0 of 22 selected</Status>
                  <span>Filters:</span>
                  <FilterBox>
                    <PlainButton aria-label="Filter by time" disabled $faded><ClockIcon /></PlainButton>
                    <PlainButton aria-label="Filter by range" disabled $faded><ClockIcon ticks /></PlainButton>
                  </FilterBox>
                  <Filters>
                    <PlainButton $w={22} aria-label="Filter by selection"><FunnelIcon /></PlainButton>
                    <FilterDivider />
                    <PlainButton $w={31} aria-label="Filter by extent" disabled><ExtentIcon /></PlainButton>
                  </Filters>
                  <Zoom>
                    <PlainButton $w={10} aria-label="Zoom out"><Icon w={10} h={10}><path d="M1 5h8" stroke="#666" strokeWidth="3" /></Icon></PlainButton>
                    <Slider type="range" aria-label="Row zoom" defaultValue={50} />
                    <PlainButton $w={12} aria-label="Zoom in"><Icon w={10} h={10}><path d="M0 5h10M5 0v10" stroke="#666" strokeWidth="3" /></Icon></PlainButton>
                  </Zoom>
                  <ZoomInput aria-label="Zoom level" defaultValue="100%" />
                </Footer>
              </Dock>
            </Body>
          </Window>
        </Stage>
      </Page>
    </>
  );
}
